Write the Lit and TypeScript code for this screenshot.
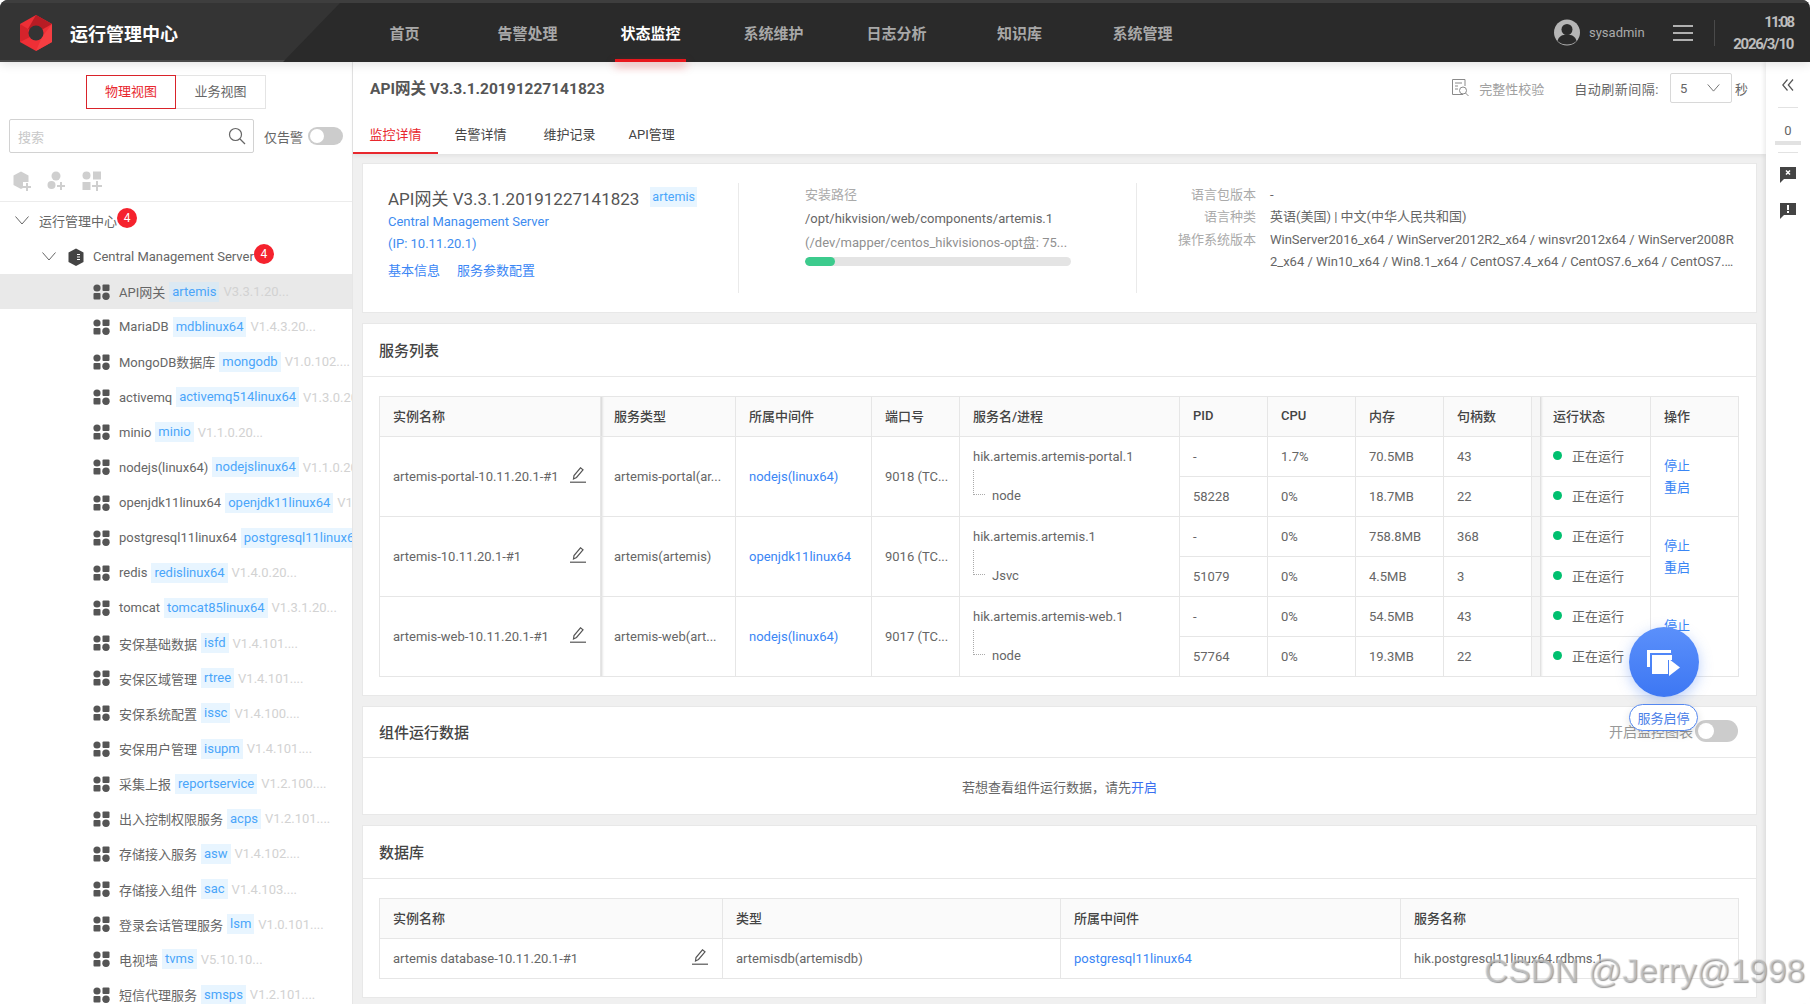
import {LitElement, html, css, svg} from 'lit';
import {customElement} from 'lit/decorators.js';

const NAV = ['首页', '告警处理', '状态监控', '系统维护', '日志分析', '知识库', '系统管理'];

const TREE = [
  ['API网关', 'artemis', 'V3.3.1.20...'],
  ['MariaDB', 'mdblinux64', 'V1.4.3.20...'],
  ['MongoDB数据库', 'mongodb', 'V1.0.102....'],
  ['activemq', 'activemq514linux64', 'V1.3.0.20...'],
  ['minio', 'minio', 'V1.1.0.20...'],
  ['nodejs(linux64)', 'nodejslinux64', 'V1.1.0.20...'],
  ['openjdk11linux64', 'openjdk11linux64', 'V1.1.0.20...'],
  ['postgresql11linux64', 'postgresql11linux64', 'V1.1.0.20...'],
  ['redis', 'redislinux64', 'V1.4.0.20...'],
  ['tomcat', 'tomcat85linux64', 'V1.3.1.20...'],
  ['安保基础数据', 'isfd', 'V1.4.101....'],
  ['安保区域管理', 'rtree', 'V1.4.101....'],
  ['安保系统配置', 'issc', 'V1.4.100....'],
  ['安保用户管理', 'isupm', 'V1.4.101....'],
  ['采集上报', 'reportservice', 'V1.2.100....'],
  ['出入控制权限服务', 'acps', 'V1.2.101....'],
  ['存储接入服务', 'asw', 'V1.4.102....'],
  ['存储接入组件', 'sac', 'V1.4.103....'],
  ['登录会话管理服务', 'lsm', 'V1.0.101....'],
  ['电视墙', 'tvms', 'V5.10.10...'],
  ['短信代理服务', 'smsps', 'V1.2.101....'],
];

const SERVICES = [
  {
    name: 'artemis-portal-10.11.20.1-#1', type: 'artemis-portal(ar...', mw: 'nodejs(linux64)', port: '9018 (TC...',
    proc: 'hik.artemis.artemis-portal.1', child: 'node',
    rows: [['-', '1.7%', '70.5MB', '43'], ['58228', '0%', '18.7MB', '22']],
  },
  {
    name: 'artemis-10.11.20.1-#1', type: 'artemis(artemis)', mw: 'openjdk11linux64', port: '9016 (TC...',
    proc: 'hik.artemis.artemis.1', child: 'Jsvc',
    rows: [['-', '0%', '758.8MB', '368'], ['51079', '0%', '4.5MB', '3']],
  },
  {
    name: 'artemis-web-10.11.20.1-#1', type: 'artemis-web(art...', mw: 'nodejs(linux64)', port: '9017 (TC...',
    proc: 'hik.artemis.artemis-web.1', child: 'node',
    rows: [['-', '0%', '54.5MB', '43'], ['57764', '0%', '19.3MB', '22']],
  },
];

const SERVICE_COLS = [221, 135, 136, 88, 220, 88, 88, 88, 88, 8, 111, 88];
const DB_COLS = [343, 338, 340, 338];

const editIcon = html`<svg class="edit" width="16" height="16" viewBox="0 0 16 16" fill="none" stroke="#555" stroke-width="1.2">
  <path d="M3.500 12 4 8.500 10.500 0.800 13 2.800 6.500 10.500z" />
  <path d="M0 15.200h16" />
</svg>`;

const blocks = html`<svg class="blocks" width="17" height="16" viewBox="0 0 17 16" fill="#555">
  <circle cx="4" cy="4" r="3.600" />
  <rect x="9.500" y="0.500" width="7" height="6.500" rx="1" />
  <rect x="0.500" y="9" width="7" height="6.500" rx="1" />
  <circle cx="13" cy="12.200" r="3.700" />
</svg>`;

const chevron = html`<svg width="14" height="9" viewBox="0 0 14 9" fill="none" stroke="#666" stroke-width="1">
  <path d="M0.500 0.500 7 8 13.500 0.500" />
</svg>`;

const cube = (fill: string) => svg`<path fill=${fill} d="M8 0.500 15.500 4.500V14L8 18 0.500 14V4.500z" />`;

@customElement('app-root')
export class AppRoot extends LitElement {
  static styles = css`
    :host {
      display: block;
      position: relative;
      width: 100%;
      height: 100vh;
      overflow: hidden;
      background: #fff;
      border-radius: 8px;
      font-family: Roboto, 'Noto Sans CJK SC', sans-serif;
      font-size: 13px;
      color: #666;
    }
    a {
      color: #3a86f5;
      text-decoration: none;
    }

    /* top bar */
    .header {
      position: relative;
      z-index: 2;
      display: flex;
      align-items: center;
      box-sizing: border-box;
      height: 62px;
      background: #2a2a2a;
      border-top: 3px solid #3e3e3e;
      box-shadow: 0 2px 10px rgba(0, 0, 0, 0.12);
    }
    .header::before {
      content: '';
      position: absolute;
      inset: 0 auto 0 0;
      width: 340px;
      background: #343434;
      border-bottom: 2px solid #484848;
      clip-path: polygon(0 0, 340px 0, 283px 100%, 0 100%);
    }
    .brand {
      position: relative;
      display: flex;
      align-items: center;
      width: 343px;
      padding-left: 20px;
      box-sizing: border-box;
      flex: none;
    }
    .brand-name {
      margin-left: 18px;
      color: #fff;
      font-size: 18px;
      font-weight: 700;
    }
    .nav {
      display: flex;
      height: 100%;
    }
    .nav-item {
      position: relative;
      width: 123px;
      display: flex;
      align-items: center;
      justify-content: center;
      box-sizing: border-box;
      font-size: 15px;
      font-weight: 700;
      color: #a8a8a8;
    }
    .nav-item.active {
      color: #fff;
    }
    .nav-item.active::after {
      content: '';
      position: absolute;
      left: 26px;
      right: 26px;
      bottom: 0;
      height: 3px;
      background: #e8171d;
      box-shadow: 0 4px 9px rgba(232, 23, 29, 0.55);
    }
    .user {
      margin-left: auto;
      display: flex;
      align-items: center;
      padding-right: 17px;
      color: #aaa;
    }
    .user-name {
      margin-left: 9px;
      width: 84px;
    }
    .menu-icon {
      display: block;
    }
    .vsep {
      width: 1px;
      height: 26px;
      margin: 0 16px 0 21px;
      background: #4a4a4a;
    }
    .clock {
      width: 62px;
      text-align: right;
      font-size: 15px;
      line-height: 22px;
      font-weight: 700;
      color: #bdbdbd;
      letter-spacing: -1.3px;
    }
    .clock-time {
      letter-spacing: -2px;
    }

    .body {
      display: flex;
      height: calc(100vh - 62px);
    }

    /* left tree */
    .side {
      width: 352px;
      flex: none;
      overflow: hidden;
      background: #fff;
      border-right: 1px solid #e6e6e6;
    }
    .view-switch {
      display: flex;
      padding: 13px 0 0 86px;
    }
    .view-btn {
      width: 90px;
      height: 34px;
      box-sizing: border-box;
      display: flex;
      align-items: center;
      justify-content: center;
      padding-bottom: 3px;
      border: 1px solid #e4e4e4;
      border-left: 0;
    }
    .view-btn.active {
      color: #e8282e;
      border: 1px solid #d9232a;
    }
    .search-row {
      display: flex;
      align-items: center;
      padding: 10px 0 0 9px;
    }
    .search {
      width: 245px;
      height: 34px;
      box-sizing: border-box;
      display: flex;
      align-items: center;
      justify-content: space-between;
      padding: 0 7px 0 8px;
      border: 1px solid #d2d2d2;
      border-radius: 2px;
      color: #c8c8c8;
    }
    .only-alarm {
      margin-left: 10px;
      width: 44px;
    }
    .toggle {
      width: 35px;
      height: 18px;
      border-radius: 9px;
      background: #ccc;
      box-sizing: border-box;
      padding: 2px;
    }
    .toggle i {
      display: block;
      width: 14px;
      height: 14px;
      border-radius: 50%;
      background: #fff;
    }
    .tools {
      display: flex;
      gap: 16px;
      align-items: center;
      box-sizing: border-box;
      height: 49px;
      padding: 8px 0 0 13px;
      border-bottom: 1px solid #ececec;
    }
    .tree-row {
      display: flex;
      align-items: center;
      height: 35.15px;
      white-space: nowrap;
    }
    .tree-root {
      height: 37px;
      padding-left: 15px;
      gap: 10px;
    }
    .tree-group {
      padding-left: 42px;
      gap: 12px;
    }
    .tree-group .label {
      margin-left: -3px;
    }
    .badge {
      flex: none;
      width: 20px;
      height: 20px;
      margin: -6px 0 0 -10px;
      border-radius: 50%;
      background: #f5222d;
      color: #fff;
      font-size: 12px;
      line-height: 20px;
      text-align: center;
    }
    .tree-group .badge {
      margin-left: -12px;
    }
    .tree-item {
      padding-left: 93px;
    }
    .tree-item.selected {
      background: #e9e9e9;
    }
    .tree-item.selected .tag {
      background: #dbe9f3;
    }
    .blocks {
      flex: none;
      margin-right: 9px;
    }
    .tag {
      flex: none;
      margin: 0 4px;
      padding: 0 3px;
      line-height: 20px;
      color: #4aa5fa;
      background: #e8f5ff;
    }
    .ver {
      flex: none;
      color: #d2d2d2;
    }

    /* main area */
    .main {
      flex: 1;
      min-width: 0;
      display: flex;
      flex-direction: column;
      background: #f0f0f0;
    }
    .subhead {
      height: 92px;
      flex: none;
      box-sizing: border-box;
      background: #fff;
      box-shadow: 0 2px 4px rgba(0, 0, 0, 0.06);
    }
    .subhead-top {
      display: flex;
      align-items: center;
      height: 52px;
      padding: 0 18px 0 17px;
    }
    .page-title {
      font-size: 15.5px;
      font-weight: 700;
      color: #555;
      margin-right: auto;
      margin-top: -3px;
    }
    .check {
      margin: 0 30px 0 10px;
      color: #a0a0a0;
    }
    .refresh-label {
      letter-spacing: 0.5px;
    }
    .select {
      width: 62px;
      height: 30px;
      box-sizing: border-box;
      margin: 0 3px 0 11px;
      display: flex;
      align-items: center;
      justify-content: space-between;
      padding: 0 11px 0 9px;
      border: 1px solid #d8d8d8;
      border-radius: 2px;
    }
    .tabs {
      display: flex;
      height: 40px;
    }
    .tab {
      display: flex;
      align-items: center;
      padding: 0 16.5px 2px;
      box-sizing: border-box;
      color: #444;
    }
    .tab:nth-child(3) {
      margin-left: 4px;
    }
    .tab.active {
      color: #e8282e;
      padding-bottom: 0;
      border-bottom: 2px solid #e8282e;
    }
    .content {
      flex: 1;
      min-height: 0;
      display: flex;
      flex-direction: column;
      gap: 10px;
      padding: 9px 9px 0;
    }
    .card {
      flex: none;
      box-sizing: border-box;
      background: #fff;
      border: 1px solid #e8e8e8;
    }
    .info {
      height: 150px;
      display: grid;
      grid-template-columns: 375px 398px 1fr;
      padding-top: 19px;
    }
    .info-col {
      height: 110px;
      box-sizing: border-box;
    }
    .info-a {
      padding-left: 25px;
    }
    .info-b {
      border-left: 1px solid #eaeaea;
      padding-left: 66px;
      line-height: 24px;
    }
    .info-c {
      border-left: 1px solid #eaeaea;
      display: grid;
      grid-template-columns: 119px 466px;
      grid-auto-rows: min-content;
      column-gap: 14px;
      line-height: 22.3px;
      padding-top: 1px;
      color: #666;
    }
    .title-line {
      display: flex;
      align-items: center;
      height: 28px;
      font-size: 17px;
      color: #555;
    }
    .title-line .tag {
      margin: 0 0 0 11px;
      padding: 0 2px;
      font-size: 12.5px;
    }
    .info-a .link-line {
      line-height: 21.5px;
    }
    .link-line a {
      color: #3e8cf0;
    }
    .info-links {
      display: flex;
      gap: 17px;
      margin-top: 6px;
      line-height: 22px;
    }
    .muted {
      color: #aaa;
    }
    .note {
      color: #909090;
    }
    .bar {
      width: 266px;
      height: 9px;
      margin-top: 2px;
      border-radius: 5px;
      background: #e4e4e4;
      overflow: hidden;
    }
    .bar i {
      display: block;
      height: 100%;
      border-radius: 5px;
      background: #3ccb8d;
    }
    .info-c .key {
      text-align: right;
      color: #aaa;
    }
    .clamp {
      display: -webkit-box;
      -webkit-box-orient: vertical;
      -webkit-line-clamp: 2;
      overflow: hidden;
      word-break: break-all;
    }
    .card-head {
      display: flex;
      align-items: center;
      justify-content: space-between;
      height: 53px;
      box-sizing: border-box;
      padding: 0 18px 2px 16px;
      border-bottom: 1px solid #e8e8e8;
    }
    .card-title {
      font-size: 15px;
      font-weight: 500;
      color: #444;
    }
    .card-body {
      padding: 19px 16px 18px;
    }
    table {
      width: 1359px;
      table-layout: fixed;
      border-collapse: separate;
      border-spacing: 0;
      border-top: 1px solid #e6e6e6;
      border-left: 1px solid #e6e6e6;
    }
    th,
    td {
      height: 40px;
      box-sizing: border-box;
      padding: 0 0 0 13px;
      border-right: 1px solid #e6e6e6;
      border-bottom: 1px solid #e6e6e6;
      font-weight: 400;
      text-align: left;
      white-space: nowrap;
      overflow: hidden;
    }
    th {
      padding-bottom: 3px;
      background: #fafafa;
      font-weight: 500;
      color: #444;
    }
    th.gap,
    td.gap {
      padding: 0;
      background: #f6f6f6;
      border-right: 0;
    }
    .after-fixed {
      box-shadow: inset 4px 0 3px -3px rgba(0, 0, 0, 0.18);
    }
    .name-cell {
      display: flex;
      align-items: center;
      justify-content: space-between;
      padding-right: 14px;
    }
    .edit {
      flex: none;
      margin-top: -4px;
    }
    td.proc {
      vertical-align: top;
      line-height: 39px;
    }
    .proc-child {
      display: flex;
      height: 39px;
    }
    .elbow {
      width: 12px;
      height: 25px;
      margin: -6px 7px 0 0;
      box-sizing: border-box;
      border-left: 1px dotted #aaa;
      border-bottom: 1px dotted #aaa;
    }
    .status {
      display: flex;
      align-items: center;
      gap: 10px;
      padding-bottom: 2px;
    }
    .dot {
      width: 9px;
      height: 9px;
      border-radius: 50%;
      background: #00c06f;
    }
    .ops a {
      display: block;
      line-height: 22px;
    }
    .runtime-head {
      height: 51px;
    }
    .runtime-switch {
      display: flex;
      align-items: center;
      gap: 2px;
      font-size: 14px;
      color: #999;
    }
    .runtime-switch .toggle {
      width: 43px;
      height: 22px;
      border-radius: 11px;
      padding: 3px;
    }
    .runtime-switch .toggle i {
      width: 16px;
      height: 16px;
    }
    .runtime-body {
      height: 56px;
      display: flex;
      align-items: center;
      justify-content: center;
    }
    .runtime-body a {
      color: #3a6ff0;
    }

    /* right rail */
    .rail {
      position: relative;
      z-index: 1;
      width: 44px;
      flex: none;
      display: flex;
      flex-direction: column;
      align-items: center;
      background: #fff;
      box-shadow: -2px 0 4px rgba(0, 0, 0, 0.08);
    }
    .rail-top {
      height: 45px;
      width: 20px;
      display: flex;
      align-items: center;
      justify-content: center;
      border-bottom: 1px solid #e2e2e2;
    }
    .rail-count {
      width: 20px;
      height: 44px;
      display: flex;
      flex-direction: column;
      align-items: center;
      border-bottom: 1px solid #e2e2e2;
    }
    .rail-count span {
      line-height: 45px;
      height: 33px;
    }
    .rail-count i {
      width: 26px;
      height: 4px;
      flex: none;
      background: #e2e2e2;
    }
    .rail-msg {
      margin-top: 13px;
    }
    .rail-msg + .rail-msg {
      margin-top: 19px;
    }

    /* floating button + watermark */
    .fab {
      position: absolute;
      z-index: 3;
      left: 1629px;
      top: 627px;
      width: 70px;
      height: 70px;
      border-radius: 50%;
      display: flex;
      align-items: center;
      justify-content: center;
      background: linear-gradient(#5b90fb, #3d77f3);
      box-shadow: 0 4px 14px rgba(61, 119, 243, 0.35);
    }
    .fab svg {
      margin-top: 3px;
    }
    .fab-label {
      position: absolute;
      z-index: 3;
      left: 1629px;
      top: 704px;
      width: 69px;
      height: 27px;
      box-sizing: border-box;
      display: flex;
      align-items: center;
      justify-content: center;
      border: 1px solid #5588f0;
      border-radius: 14px;
      background: #fff;
      color: #4a80e8;
      box-shadow: 0 3px 8px rgba(0, 0, 0, 0.12);
    }
    .watermark {
      position: absolute;
      z-index: 4;
      right: 5px;
      top: 952px;
      font-family: 'Liberation Sans', sans-serif;
      font-size: 33.5px;
      line-height: 38px;
      color: rgba(215, 215, 215, 0.55);
      text-shadow: 1px 1px 1px rgba(130, 130, 130, 0.8);
      white-space: nowrap;
    }
  `;

  renderLogo() {
    return html`<svg width="32" height="36" viewBox="0 0 32 36">
      <path fill="#ee2f36" d="M16 0 32 9V27L16 36 0 27V9z" />
      <path fill="#b81c24" d="M16 0 8 14 16 18 32 9z" />
      <path fill="#d5232b" d="M0 9V27L10 22 8 14z" />
      <path fill="#f43e42" d="M16 36 32 27V9L22 22z" />
      <circle cx="16" cy="18" r="7.500" fill="#343434" />
    </svg>`;
  }

  renderHeader() {
    return html`<header class="header">
      <div class="brand">${this.renderLogo()}<span class="brand-name">运行管理中心</span></div>
      <nav class="nav">
        ${NAV.map((n) => html`<div class="nav-item ${n === '状态监控' ? 'active' : ''}">${n}</div>`)}
      </nav>
      <div class="user">
        <svg width="26" height="27" viewBox="0 0 26 27">
          <circle cx="13" cy="13.500" r="13" fill="#b5b5b5" />
          <circle cx="13" cy="10.500" r="5.500" fill="#2a2a2a" />
          <path fill="#2a2a2a" d="M3.500 22c1-4.500 5-6.500 9.500-6.500s8.500 2 9.500 6.500c-2.500 2.500-6 3.500-9.500 3.500s-7-1-9.500-3.500z" />
        </svg>
        <span class="user-name">sysadmin</span>
        <svg class="menu-icon" width="20" height="16" viewBox="0 0 20 16" fill="#b0b0b0">
          <rect y="0" width="20" height="2" />
          <rect y="7" width="20" height="2" />
          <rect y="14" width="20" height="2" />
        </svg>
        <div class="vsep"></div>
        <div class="clock"><div class="clock-time">11:08</div><div>2026/3/10</div></div>
      </div>
    </header>`;
  }

  renderSide() {
    return html`<aside class="side">
      <div class="view-switch">
        <div class="view-btn active">物理视图</div>
        <div class="view-btn">业务视图</div>
      </div>
      <div class="search-row">
        <div class="search">
          <span>搜索</span>
          <svg width="18" height="18" viewBox="0 0 18 18" fill="none" stroke="#666" stroke-width="1.200">
            <circle cx="7.500" cy="7.500" r="6" />
            <path d="M12 12l5 5" />
          </svg>
        </div>
        <span class="only-alarm">仅告警</span>
        <div class="toggle"><i></i></div>
      </div>
      <div class="tools">
        <svg width="18" height="20" viewBox="0 0 18 20" fill="#cfcfcf">
          ${cube('#cfcfcf')}
          <path fill="#fff" d="M10 11h8v9h-8z" />
          <path d="M13 12h2v3h3v2h-3v3h-2v-3h-3v-2h3z" />
        </svg>
        <svg width="19" height="20" viewBox="0 0 19 20" fill="#cfcfcf">
          <circle cx="9" cy="5" r="4.500" />
          <circle cx="4.500" cy="14" r="4" />
          <path d="M13 11h2v3h3v2h-3v3h-2v-3h-3v-2h3z" />
        </svg>
        <svg width="20" height="20" viewBox="0 0 20 20" fill="#cfcfcf">
          <circle cx="4.500" cy="4.500" r="4" />
          <rect x="11" y="0.500" width="8" height="8" />
          <rect x="0.500" y="11" width="8" height="8" />
          <path d="M14 10h2v4h4v2h-4v4h-2v-4h-4v-2h4z" />
        </svg>
      </div>
      <div class="tree-row tree-root">
        ${chevron}<span class="label">运行管理中心</span><span class="badge">4</span>
      </div>
      <div class="tree-row tree-group">
        ${chevron}
        <svg width="16" height="18" viewBox="0 0 16 18">
          ${cube('#444')}
          <path fill="#fff" d="M9 6h3v1H9zM9 8.500h3v1H9zM9 11h3v1H9z" />
        </svg>
        <span class="label">Central Management Server</span><span class="badge">4</span>
      </div>
      ${TREE.map(
        ([name, tag, ver], i) => html`<div class="tree-row tree-item ${i === 0 ? 'selected' : ''}">
          ${blocks}<span>${name}</span><span class="tag">${tag}</span><span class="ver">${ver}</span>
        </div>`
      )}
    </aside>`;
  }

  renderSubhead() {
    return html`<div class="subhead">
      <div class="subhead-top">
        <span class="page-title">API网关 V3.3.1.20191227141823</span>
        <svg width="17" height="18" viewBox="0 0 17 18" fill="none" stroke="#8a8a8a" stroke-width="1">
          <path d="M11 15.500H0.500V0.500H13V7" />
          <path d="M3 4h7M3 7h3M3 10h3" />
          <circle cx="11" cy="11.500" r="3.500" />
          <path d="M13.500 14l3 3" />
        </svg>
        <span class="check">完整性校验</span>
        <span class="refresh-label">自动刷新间隔:</span>
        <div class="select">
          <span>5</span>
          <svg width="13" height="8" viewBox="0 0 14 9" fill="none" stroke="#666">
            <path d="M0.500 0.500 7 8 13.500 0.500" />
          </svg>
        </div>
        <span>秒</span>
      </div>
      <div class="tabs">
        <div class="tab active">监控详情</div>
        <div class="tab">告警详情</div>
        <div class="tab">维护记录</div>
        <div class="tab">API管理</div>
      </div>
    </div>`;
  }

  renderInfo() {
    return html`<section class="card info">
      <div class="info-col info-a">
        <div class="title-line">API网关 V3.3.1.20191227141823<span class="tag">artemis</span></div>
        <div class="link-line"><a>Central Management Server</a></div>
        <div class="link-line"><a>(IP: 10.11.20.1)</a></div>
        <div class="info-links"><a>基本信息</a><a>服务参数配置</a></div>
      </div>
      <div class="info-col info-b">
        <div class="muted">安装路径</div>
        <div>/opt/hikvision/web/components/artemis.1</div>
        <div class="note">(/dev/mapper/centos_hikvisionos-opt盘: 75...</div>
        <div class="bar"><i style="width:${(30 / 266) * 100}%"></i></div>
      </div>
      <div class="info-col info-c">
        <div class="key">语言包版本</div>
        <div>-</div>
        <div class="key">语言种类</div>
        <div>英语(美国) | 中文(中华人民共和国)</div>
        <div class="key">操作系统版本</div>
        <div class="clamp">WinServer2016_x64 / WinServer2012R2_x64 / winsvr2012x64 / WinServer2008R2_x64 / Win10_x64 / Win8.1_x64 / CentOS7.4_x64 / CentOS7.6_x64 / CentOS7.7_x64 / CentOS7.8_x64</div>
      </div>
    </section>`;
  }

  renderServices() {
    const heads = ['实例名称', '服务类型', '所属中间件', '端口号', '服务名/进程', 'PID', 'CPU', '内存', '句柄数'];
    return html`<section class="card">
      <div class="card-head"><span class="card-title">服务列表</span></div>
      <div class="card-body">
        <table>
          <colgroup>${SERVICE_COLS.map((w) => html`<col style="width:${w}px" />`)}</colgroup>
          <tr>
            ${heads.map((h, i) => html`<th class=${i === 1 ? 'after-fixed' : ''}>${h}</th>`)}
            <th class="gap"></th>
            <th class="after-fixed">运行状态</th>
            <th>操作</th>
          </tr>
          ${SERVICES.map(
            (s) => html`<tr>
                <td rowspan="2"><div class="name-cell"><span>${s.name}</span>${editIcon}</div></td>
                <td rowspan="2" class="after-fixed">${s.type}</td>
                <td rowspan="2"><a>${s.mw}</a></td>
                <td rowspan="2">${s.port}</td>
                <td rowspan="2" class="proc">
                  <div>${s.proc}</div>
                  <div class="proc-child"><span class="elbow"></span><span>${s.child}</span></div>
                </td>
                ${s.rows[0].map((v) => html`<td>${v}</td>`)}
                <td class="gap"></td>
                <td class="after-fixed"><div class="status"><span class="dot"></span>正在运行</div></td>
                <td rowspan="2" class="ops"><a>停止</a><a>重启</a></td>
              </tr>
              <tr>
                ${s.rows[1].map((v) => html`<td>${v}</td>`)}
                <td class="gap"></td>
                <td class="after-fixed"><div class="status"><span class="dot"></span>正在运行</div></td>
              </tr>`
          )}
        </table>
      </div>
    </section>`;
  }

  renderRuntime() {
    return html`<section class="card">
      <div class="card-head runtime-head">
        <span class="card-title">组件运行数据</span>
        <div class="runtime-switch"><span>开启监控图表</span><div class="toggle"><i></i></div></div>
      </div>
      <div class="runtime-body"><span>若想查看组件运行数据，请先<a>开启</a></span></div>
    </section>`;
  }

  renderDatabase() {
    return html`<section class="card">
      <div class="card-head"><span class="card-title">数据库</span></div>
      <div class="card-body">
        <table>
          <colgroup>${DB_COLS.map((w) => html`<col style="width:${w}px" />`)}</colgroup>
          <tr>
            <th>实例名称</th>
            <th>类型</th>
            <th>所属中间件</th>
            <th>服务名称</th>
          </tr>
          <tr>
            <td><div class="name-cell"><span>artemis database-10.11.20.1-#1</span>${editIcon}</div></td>
            <td>artemisdb(artemisdb)</td>
            <td><a>postgresql11linux64</a></td>
            <td>hik.postgresql11linux64.rdbms.1</td>
          </tr>
        </table>
      </div>
    </section>`;
  }

  renderRail() {
    return html`<div class="rail">
      <div class="rail-top">
        <svg width="12" height="12" viewBox="0 0 12 12" fill="none" stroke="#555" stroke-width="1.200">
          <path d="M5.500 0.500 0.800 6l4.700 5.500M11 0.500 6.300 6l4.700 5.500" />
        </svg>
      </div>
      <div class="rail-count"><span>0</span><i></i></div>
      <svg class="rail-msg" width="16" height="17" viewBox="0 0 16 17">
        <path fill="#444" d="M0 1h16v12H4l-4 4z" />
        <path stroke="#fff" stroke-width="1.500" d="M6 4.500l4 4M10 4.500l-4 4" />
      </svg>
      <svg class="rail-msg" width="16" height="17" viewBox="0 0 16 17">
        <path fill="#444" d="M0 1h16v12H4l-4 4z" />
        <path fill="#fff" d="M7 3h2v5H7zM7 9h2v2H7z" />
      </svg>
    </div>`;
  }

  render() {
    return html`
      ${this.renderHeader()}
      <div class="body">
        ${this.renderSide()}
        <main class="main">
          ${this.renderSubhead()}
          <div class="content">
            ${this.renderInfo()} ${this.renderServices()} ${this.renderRuntime()} ${this.renderDatabase()}
          </div>
        </main>
        ${this.renderRail()}
      </div>
      <div class="fab">
        <svg width="34" height="27" viewBox="0 0 34 27" fill="#fff">
          <path d="M0 0h24v3H3v14H0z" />
          <path d="M5 5h20v5h-4v14H5z" />
          <path d="M22 9l11 8.500-11 8.500z" />
        </svg>
      </div>
      <div class="fab-label">服务启停</div>
      <div class="watermark">CSDN @Jerry@1998</div>
    `;
  }
}
